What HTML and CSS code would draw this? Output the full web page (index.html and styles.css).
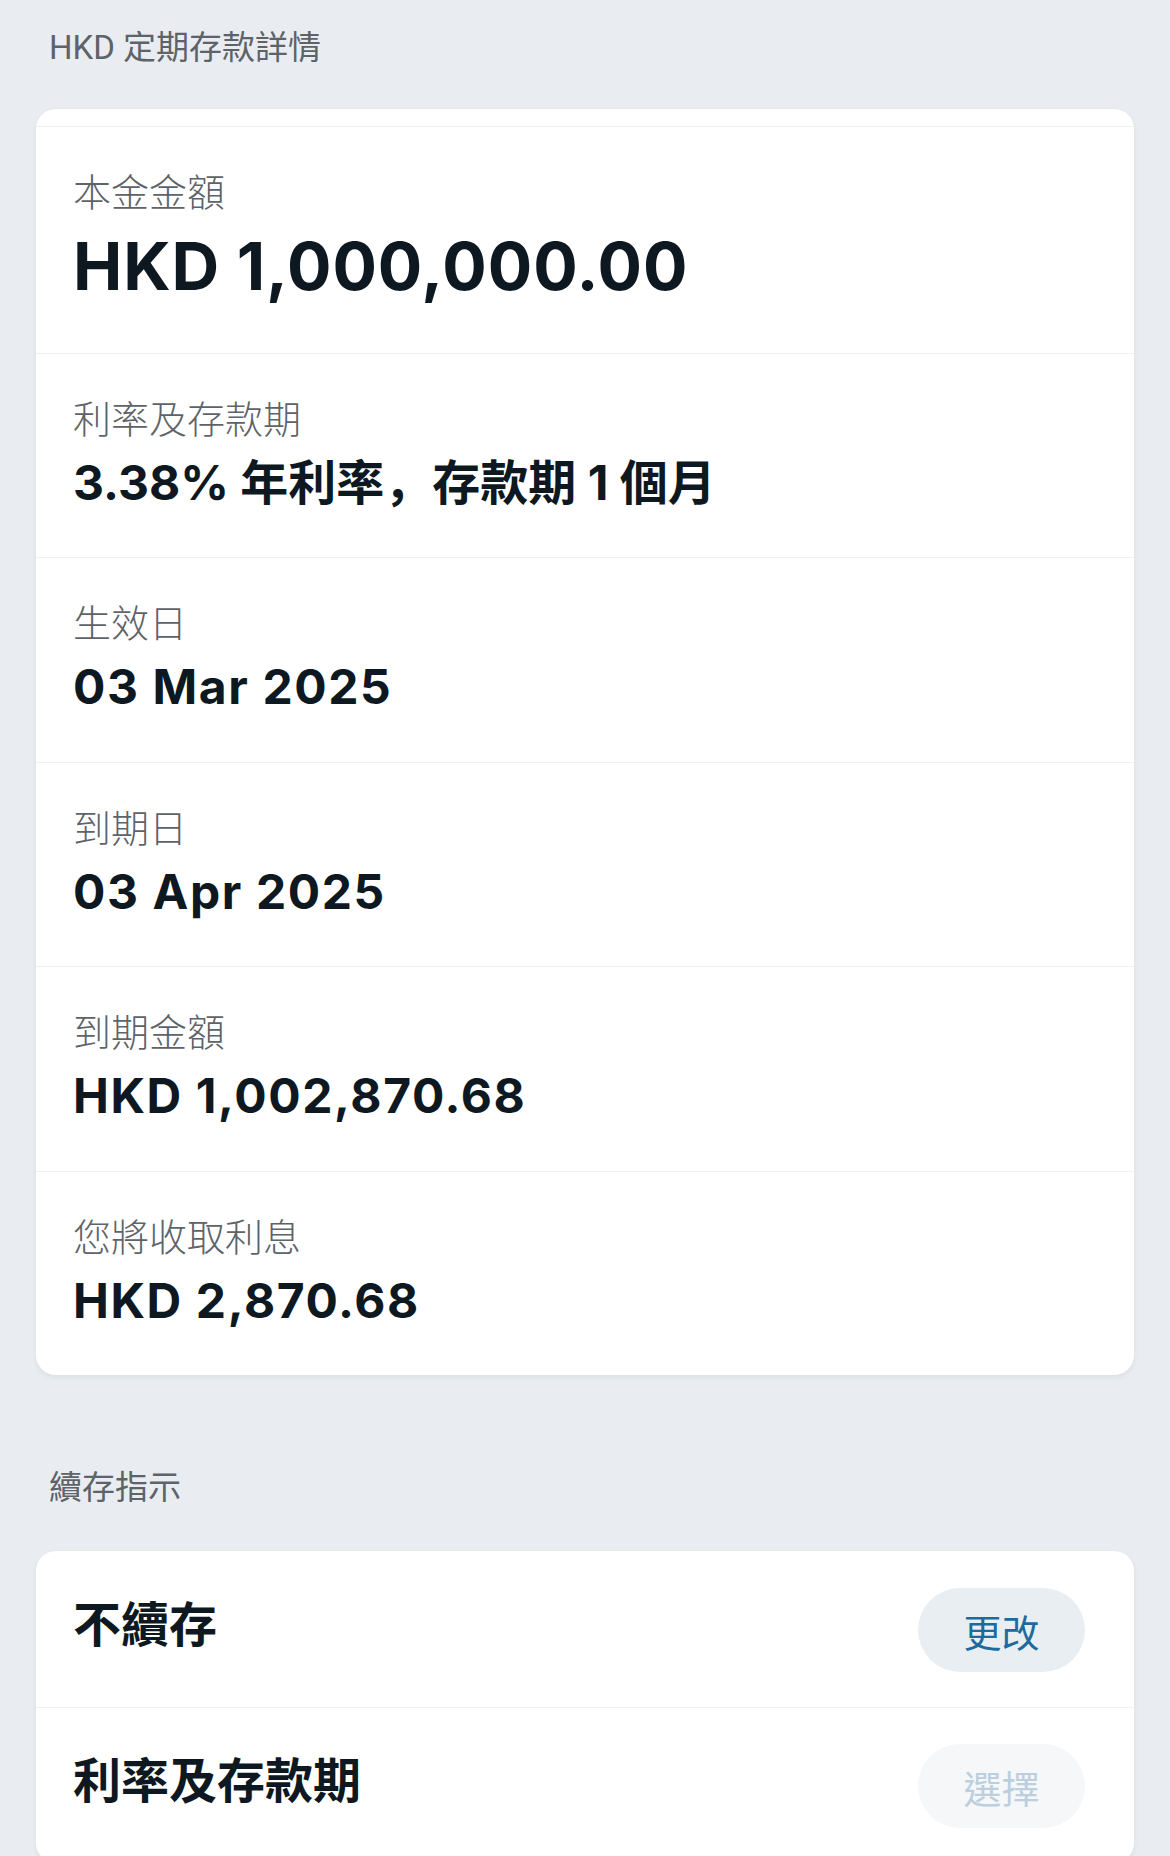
FILE: index.html
```html
<!DOCTYPE html>
<html lang="zh-Hant">
<head>
  <meta charset="UTF-8" />
  <meta name="viewport" content="width=device-width, initial-scale=1.0" />
  <title>HKD 定期存款詳情</title>
  <link rel="stylesheet" href="styles.css">
</head>
<body>
  <main class="page">
    <!-- Deposit details -->
    <h2 class="section-title first">HKD 定期存款詳情</h2>
    <section class="card details">
      <div class="row">
        <p class="label">本金金額</p>
        <p class="value value-lg">HKD 1,000,000.00</p>
      </div>
      <div class="row">
        <p class="label">利率及存款期</p>
        <p class="value mixed">3.38% 年利率<span class="punct" lang="zh-Hans">，</span>存款期 1 個月</p>
      </div>
      <div class="row">
        <p class="label">生效日</p>
        <p class="value">03 Mar 2025</p>
      </div>
      <div class="row">
        <p class="label">到期日</p>
        <p class="value">03 Apr 2025</p>
      </div>
      <div class="row">
        <p class="label">到期金額</p>
        <p class="value">HKD 1,002,870.68</p>
      </div>
      <div class="row">
        <p class="label">您將收取利息</p>
        <p class="value">HKD 2,870.68</p>
      </div>
    </section>

    <!-- Renewal instruction -->
    <h2 class="section-title">續存指示</h2>
    <section class="card actions">
      <div class="action-row">
        <span class="action-name">不續存</span>
        <button type="button" class="pill">更改</button>
      </div>
      <div class="action-row">
        <span class="action-name">利率及存款期</span>
        <button type="button" class="pill" disabled>選擇</button>
      </div>
    </section>
  </main>
</body>
</html>
```

FILE: styles.css
```css
:root {
  --page-bg: #e9edf1;
  --card-bg: #ffffff;
  --line: #eef1f4;
  --label: #5d6369;
  --text: #0e1821;
  --link: #1d6a9f;
  --pill-bg: #e9eef2;
  --pill-off-bg: #f5f7f9;
  --pill-off-text: #bccfde;
}

* {
  box-sizing: border-box;
  margin: 0;
  padding: 0;
}

body {
  background-color: var(--page-bg);
  color: var(--text);
  font-family: Inter, "Noto Sans CJK TC", sans-serif;
}

.page {
  padding: 0 36px;
}

.section-title {
  font-family: Roboto, "Noto Sans CJK TC", sans-serif;
  font-size: 33px;
  font-weight: 400;
  line-height: 44px;
  color: var(--label);
  padding-left: 13px;
  margin: 91px 0 41px;
}

.section-title.first {
  margin-top: 26px;
  margin-bottom: 39px;
}

.card {
  background-color: var(--card-bg);
  border-radius: 20px;
  box-shadow: 0 2px 5px rgba(30, 45, 60, 0.08);
  overflow: hidden;
}

.details {
  padding-top: 17px;
}

.row {
  border-top: 1px solid var(--line);
  padding: 38px 37px 43.5px;
}

.label {
  font-family: "Noto Sans CJK TC", sans-serif;
  font-size: 38px;
  line-height: 50px;
  font-weight: 300;
  color: var(--label);
}

.value {
  margin-top: 11px;
  margin-bottom: 1px;
  font-size: 48px;
  line-height: 60px;
  font-weight: 700;
  letter-spacing: 1.6px;
}

.value.mixed {
  letter-spacing: 0;
}

.value .punct {
  line-height: 1;
}

.value-lg {
  font-size: 66px;
  line-height: 81px;
  letter-spacing: 0.9px;
  margin-bottom: 2px;
}

.action-row {
  display: flex;
  justify-content: space-between;
  align-items: center;
  padding: 37px 49px 35px 37px;
}

.action-row + .action-row {
  border-top: 1px solid var(--line);
  padding-top: 36px;
}

.action-name {
  font-family: "Noto Sans CJK TC", sans-serif;
  font-size: 48px;
  font-weight: 700;
  line-height: 60px;
  margin-bottom: 18px;
}

.pill {
  width: 167px;
  height: 84px;
  border: none;
  border-radius: 42px;
  background-color: var(--pill-bg);
  color: var(--link);
  font-family: "Noto Sans CJK TC", sans-serif;
  font-size: 38px;
  cursor: pointer;
}

.pill:disabled {
  background-color: var(--pill-off-bg);
  color: var(--pill-off-text);
  cursor: default;
}
```
